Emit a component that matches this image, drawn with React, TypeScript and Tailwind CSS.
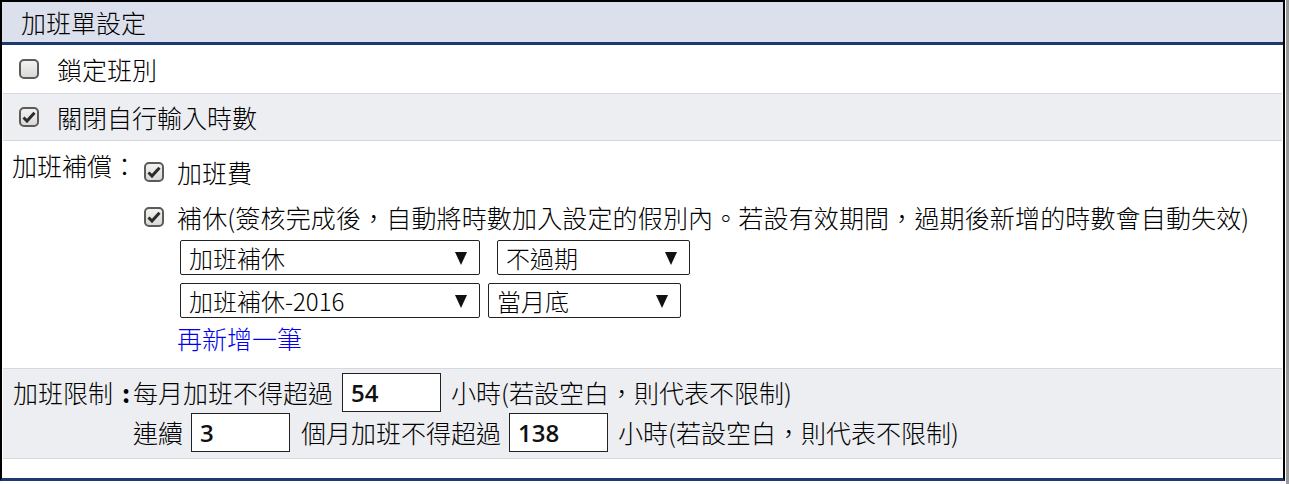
import React from "react"

const cjk = "font-['Noto_Sans_CJK_TC',sans-serif]"

function Check({ checked }: { checked?: boolean }) {
  return (
    <span className="inline-flex h-[20px] w-[20px] shrink-0 items-center justify-center rounded-[5px] border-2 border-[#5e5a55] bg-gradient-to-b from-[#f2f2f2] to-[#d9d9d9]">
      {checked && (
        <svg width="14" height="12" viewBox="0 0 14 12">
          <path d="M1.5 6.5 L5 10 L12.5 1.8" fill="none" stroke="#2b2b2b" strokeWidth="3" strokeLinejoin="miter" />
        </svg>
      )}
    </span>
  )
}

function Dropdown({ value, width }: { value: string; width: string }) {
  return (
    <div className={`flex h-[35px] items-center justify-between rounded-[2px] border border-[#222] bg-white pl-[8px] pr-[12px] ${width}`}>
      <span className="text-[24px] leading-none text-black">{value}</span>
      <svg width="12" height="14" viewBox="0 0 12 14">
        <polygon points="0,1 12,1 6,14" fill="#111" />
      </svg>
    </div>
  )
}

function NumBox({ value }: { value: string }) {
  return (
    <div className="flex h-[39px] w-[99px] items-center border border-[#222] bg-white px-[8px]">
      <span className="font-['Open_Sans',sans-serif] text-[24px] font-semibold leading-none text-[#111]">{value}</span>
    </div>
  )
}

export default function App() {
  return (
    <div className={`flex h-[484px] w-[1289px] bg-white ${cjk} text-[25px] font-light text-black`}>
      <div className="flex h-[481px] w-[1285px] flex-col border-x-2 border-t-2 border-b-[3px] border-x-black border-t-black border-b-[#1d3a70]">
        <div className="flex h-[43px] shrink-0 items-center border-b-[3px] border-[#1d3a70] bg-[#dbe0ec] pl-[19px] text-[25px] leading-none">
          加班單設定
        </div>

        <div className="flex h-[48px] shrink-0 items-center gap-[18px] pl-[17px] leading-none">
          <Check />
          <span>鎖定班別</span>
        </div>

        <div className="mx-[1px] flex h-[48px] shrink-0 items-center gap-[18px] border-y border-[#d5d8df] bg-[#edeef2] pl-[16px] leading-none">
          <Check checked />
          <span>關閉自行輸入時數</span>
        </div>

        <div className="flex h-[227px] shrink-0 pt-[9px] leading-none">
          <div className="w-[142px] shrink-0 pl-[10px] pt-[3px]">加班補償：</div>
          <div className="flex flex-col">
            <div className="flex h-[44px] items-center gap-[13px]">
              <Check checked />
              <span>加班費</span>
            </div>
            <div className="flex h-[46px] items-center gap-[13px]">
              <Check checked />
              <span className="tracking-[0.15px]">補休(簽核完成後，自動將時數加入設定的假別內。若設有效期間，過期後新增的時數會自動失效)</span>
            </div>
            <div className="ml-[36px] flex flex-col gap-[8px]">
              <div className="flex gap-[17px]">
                <Dropdown value="加班補休" width="w-[300px]" />
                <Dropdown value="不過期" width="w-[193px]" />
              </div>
              <div className="flex gap-[8px]">
                <Dropdown value="加班補休-2016" width="w-[300px]" />
                <Dropdown value="當月底" width="w-[193px]" />
              </div>
            </div>
            <div className="ml-[33px] flex h-[40px] items-center text-[#0000ee]">再新增一筆</div>
          </div>
        </div>

        <div className="mx-[1px] flex h-[91px] shrink-0 border-y border-[#d5d8df] bg-[#edeef2] pt-[4px] leading-none">
          <div className="flex h-[39px] w-[130px] shrink-0 items-center pl-[10px]">
            <span>加班限制</span>
            <span className="ml-[9px] font-bold">:</span>
          </div>
          <div className="flex flex-col gap-[1px]">
            <div className="flex items-center">
              <span>每月加班不得超過</span>
              <span className="ml-[9px] mr-[10px]"><NumBox value="54" /></span>
              <span>小時(若設空白，則代表不限制)</span>
            </div>
            <div className="flex items-center">
              <span>連續</span>
              <span className="ml-[8px] mr-[11px]"><NumBox value="3" /></span>
              <span>個月加班不得超過</span>
              <span className="ml-[8px] mr-[10px]"><NumBox value="138" /></span>
              <span>小時(若設空白，則代表不限制)</span>
            </div>
          </div>
        </div>
        <div className="flex-1" />
      </div>
      <div className="w-[1px]" />
      <div className="h-full w-[3px] bg-[#9a9a9a]" />
    </div>
  )
}
